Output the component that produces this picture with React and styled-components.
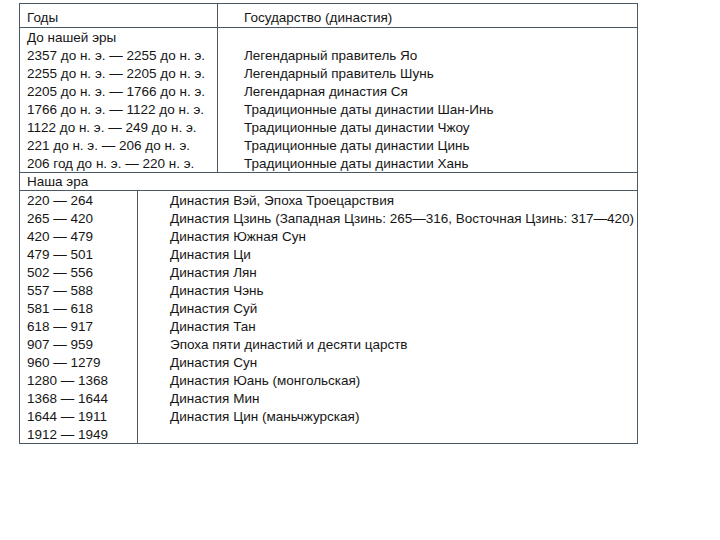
import React from 'react';
import styled, { createGlobalStyle } from 'styled-components';

const GlobalStyle = createGlobalStyle`
  html, body {
    margin: 0;
    padding: 0;
    background: #ffffff;
  }
  body {
    font-family: "Liberation Sans", Arial, sans-serif;
    color: #161616;
  }
`;

const Page = styled.div`
  width: 720px;
  height: 540px;
  padding: 3px 0 0 19px;
  box-sizing: border-box;
`;

const Table = styled.div`
  width: 619px;
  box-sizing: border-box;
  border: 1px solid #4d5866;
  display: flex;
  flex-direction: column;
`;

const Section = styled.div`
  border-bottom: ${({ last }) => (last ? 'none' : '1px solid #4d5866')};
`;

const Row = styled.div`
  display: grid;
  grid-template-columns: ${({ left }) => (left ? `${left}px 1fr` : '1fr')};
  height: ${({ h }) => h || 18}px;
`;

const Cell = styled.div`
  display: flex;
  align-items: ${({ bottom }) => (bottom ? 'flex-end' : 'center')};
  padding-left: ${({ pad }) => pad || 7}px;
  padding-bottom: ${({ bottom }) => (bottom ? 2 : 0)}px;
  border-right: ${({ divider }) => (divider ? '1px solid #4d5866' : 'none')};
  font-size: 13.5px;
  white-space: nowrap;
  overflow: visible;
`;

const bcRows = [
  ['До нашей эры', ''],
  ['2357 до н. э. — 2255 до н. э.', 'Легендарный правитель Яо'],
  ['2255 до н. э. — 2205 до н. э.', 'Легендарный правитель Шунь'],
  ['2205 до н. э. — 1766 до н. э.', 'Легендарная династия Ся'],
  ['1766 до н. э. — 1122 до н. э.', 'Традиционные даты династии Шан-Инь'],
  ['1122 до н. э. — 249 до н. э.', 'Традиционные даты династии Чжоу'],
  ['221 до н. э. — 206 до н. э.', 'Традиционные даты династии Цинь'],
  ['206 год до н. э. — 220 н. э.', 'Традиционные даты династии Хань'],
];

const adRows = [
  ['220 — 264', 'Династия Вэй, Эпоха Троецарствия'],
  ['265 — 420', 'Династия Цзинь (Западная Цзинь: 265—316, Восточная Цзинь: 317—420)'],
  ['420 — 479', 'Династия Южная Сун'],
  ['479 — 501', 'Династия Ци'],
  ['502 — 556', 'Династия Лян'],
  ['557 — 588', 'Династия Чэнь'],
  ['581 — 618', 'Династия Суй'],
  ['618 — 917', 'Династия Тан'],
  ['907 — 959', 'Эпоха пяти династий и десяти царств'],
  ['960 — 1279', 'Династия Сун'],
  ['1280 — 1368', 'Династия Юань (монгольская)'],
  ['1368 — 1644', 'Династия Мин'],
  ['1644 — 1911', 'Династия Цин (маньчжурская)'],
  ['1912 — 1949', ''],
];

export default function App() {
  return (
    <>
      <GlobalStyle />
      <Page>
        <Table>
          <Section>
            <Row left={198} h={23}>
              <Cell divider bottom>Годы</Cell>
              <Cell pad={26} bottom>Государство (династия)</Cell>
            </Row>
          </Section>
          <Section>
            {bcRows.map(([years, state]) => (
              <Row key={years} left={198}>
                <Cell divider>{years}</Cell>
                <Cell pad={26}>{state}</Cell>
              </Row>
            ))}
          </Section>
          <Section>
            <Row h={17}>
              <Cell>Наша эра</Cell>
            </Row>
          </Section>
          <Section last>
            {adRows.map(([years, state]) => (
              <Row key={years} left={118}>
                <Cell divider>{years}</Cell>
                <Cell pad={32}>{state}</Cell>
              </Row>
            ))}
          </Section>
        </Table>
      </Page>
    </>
  );
}
